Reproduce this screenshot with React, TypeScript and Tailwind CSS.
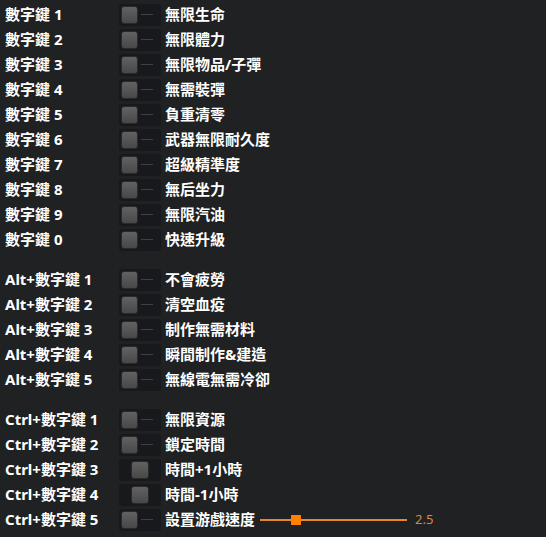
import { useState } from "react";

type Row = { key: string; label: string; mid?: boolean; slider?: boolean };

const groups: Row[][] = [
  [
    { key: "數字鍵 1", label: "無限生命" },
    { key: "數字鍵 2", label: "無限體力" },
    { key: "數字鍵 3", label: "無限物品/子彈" },
    { key: "數字鍵 4", label: "無需裝彈" },
    { key: "數字鍵 5", label: "負重清零" },
    { key: "數字鍵 6", label: "武器無限耐久度" },
    { key: "數字鍵 7", label: "超級精準度" },
    { key: "數字鍵 8", label: "無后坐力" },
    { key: "數字鍵 9", label: "無限汽油" },
    { key: "數字鍵 0", label: "快速升級" },
  ],
  [
    { key: "Alt+數字鍵 1", label: "不會疲勞" },
    { key: "Alt+數字鍵 2", label: "清空血疫" },
    { key: "Alt+數字鍵 3", label: "制作無需材料" },
    { key: "Alt+數字鍵 4", label: "瞬間制作&建造" },
    { key: "Alt+數字鍵 5", label: "無線電無需冷卻" },
  ],
  [
    { key: "Ctrl+數字鍵 1", label: "無限資源" },
    { key: "Ctrl+數字鍵 2", label: "鎖定時間" },
    { key: "Ctrl+數字鍵 3", label: "時間+1小時", mid: true },
    { key: "Ctrl+數字鍵 4", label: "時間-1小時", mid: true },
    { key: "Ctrl+數字鍵 5", label: "設置游戲速度", slider: true },
  ],
];

const Toggle = ({ mid }: { mid?: boolean }) => {
  if (mid) {
    return (
      <div className="w-[42px] h-[22px] rounded-[3px] bg-[#18191c] flex items-center justify-center">
        <div className="w-[18px] h-[18px] rounded-[3px] bg-gradient-to-b from-[#626262] to-[#484848] border border-[#2a2a2a]" />
      </div>
    );
  }
  return (
    <div className="w-[42px] h-[22px] rounded-[3px] bg-[#18191c] flex items-center pl-[2px] gap-[3px]">
      <div className="w-[17px] h-[18px] rounded-[3px] bg-gradient-to-b from-[#626262] to-[#484848] border border-[#2a2a2a]" />
      <div className="w-[12px] h-px bg-[#3e4044]" />
    </div>
  );
};

const Slider = () => {
  const [value] = useState(2.5);
  return (
    <div className="flex items-center ml-[5px]">
      <div className="relative w-[147px] h-[12px] flex items-center">
        <div className="w-full h-[2px] bg-[#e8862a]" />
        <div className="absolute left-[31px] top-[1px] w-[10px] h-[10px] bg-[#ff8000]" />
      </div>
      <span className="ml-[8px] text-[13px] font-normal text-[#d9893a]">{value}</span>
    </div>
  );
};

export default function App() {
  return (
    <div
      className="w-[546px] h-[537px] bg-[#202122] text-white pt-[2px] flex flex-col gap-[15px]"
      style={{ fontFamily: '"Noto Sans", "Noto Sans CJK TC", sans-serif' }}
    >
      {groups.map((g, gi) => (
        <div key={gi} className="flex flex-col">
          {g.map((r) => (
            <div key={r.key} className="h-[25px] flex items-center">
              <div className="w-[119px] pl-[5px] text-[15px] font-bold leading-none">{r.key}</div>
              <Toggle mid={r.mid} />
              <div className="ml-[4px] text-[15px] font-bold leading-none">{r.label}</div>
              {r.slider && <Slider />}
            </div>
          ))}
        </div>
      ))}
    </div>
  );
}
